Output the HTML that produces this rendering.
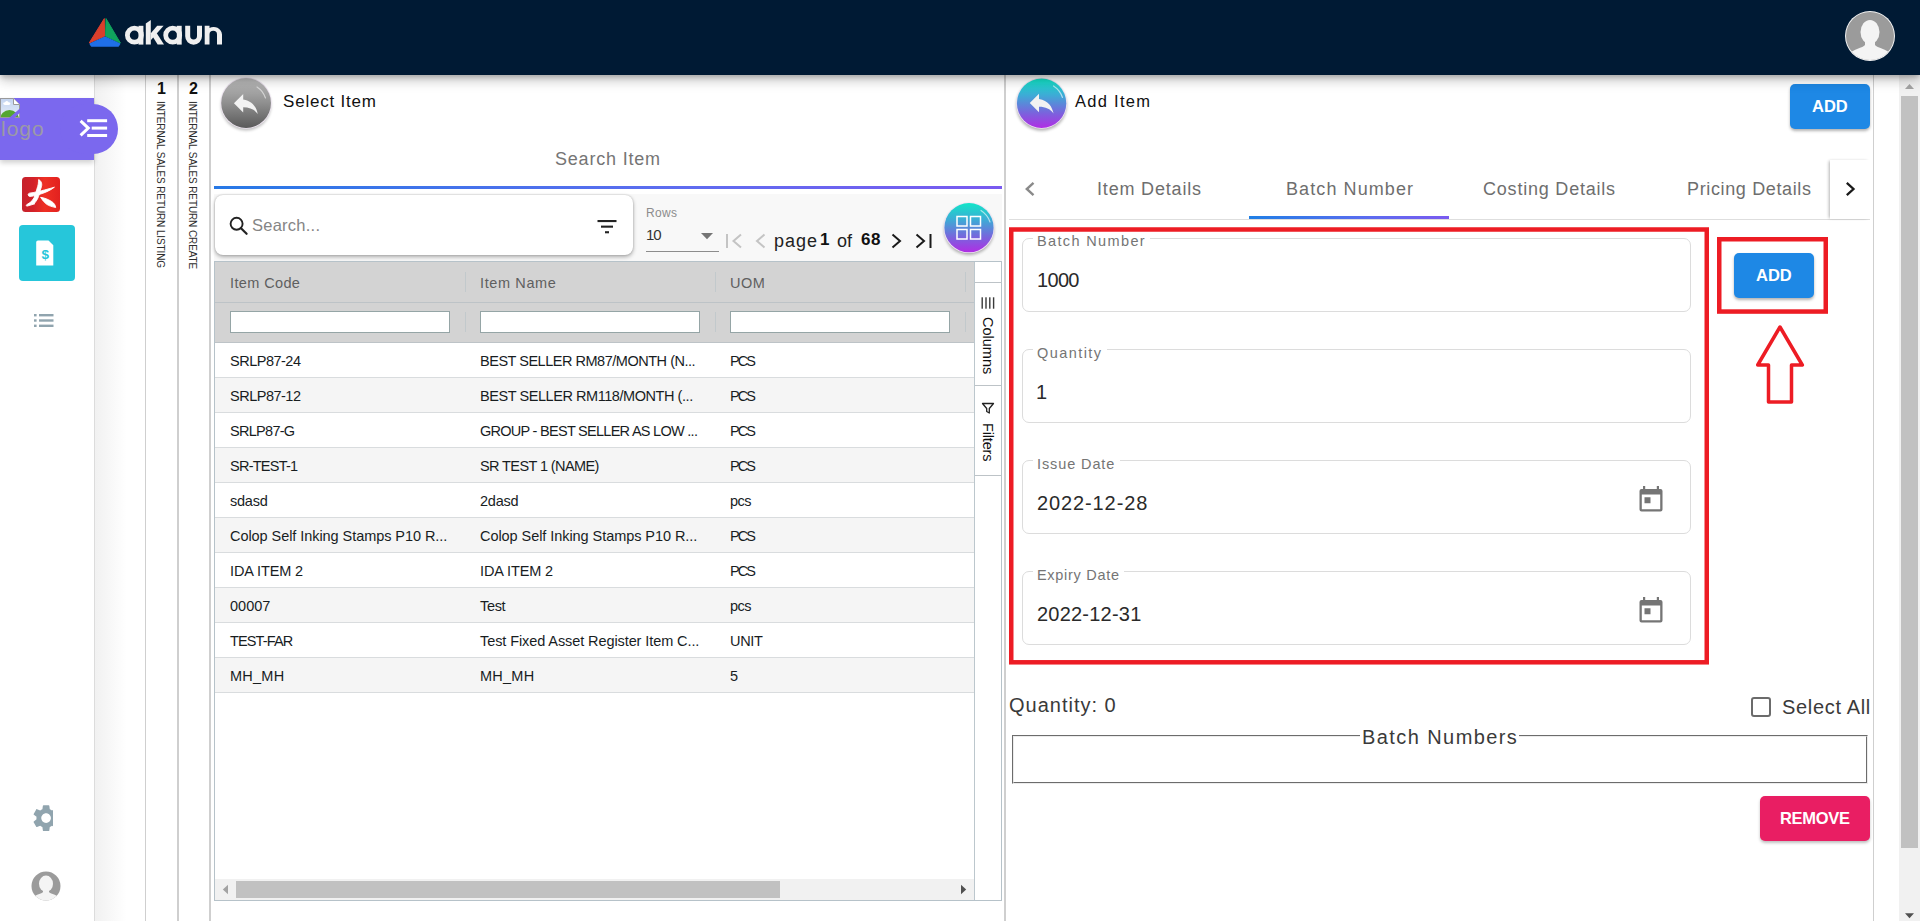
<!DOCTYPE html>
<html lang="en">
<head>
<meta charset="utf-8">
<title>akaun - Internal Sales Return</title>
<style>
*{box-sizing:border-box;margin:0;padding:0}
html,body{width:1920px;height:921px;overflow:hidden;background:#fff}
body{position:relative;font-family:"Liberation Sans",sans-serif;color:#222}
.abs{position:absolute}
.t{position:absolute;white-space:nowrap;line-height:20px;height:20px}
.vt{position:absolute;white-space:nowrap;line-height:12px;height:12px;transform-origin:0 0;transform:rotate(90deg)}
#nav{left:0;top:0;width:1920px;height:75px;background:#001a34;box-shadow:0 3px 5px -1px rgba(0,0,0,.2),0 6px 10px 0 rgba(0,0,0,.14),0 1px 18px 0 rgba(0,0,0,.12);z-index:50}
#side{left:0;top:75px;width:95px;height:846px;background:#fff;border-right:1px solid #dcdcdc}
#gpanel{left:95px;top:75px;width:51px;height:846px;background:linear-gradient(90deg,#f1f1f1,#fff 62%)}
.vcol{top:75px;height:846px;background:#fff}
#leftp{left:211px;top:75px;width:793px;height:846px;background:#fff}
#rightp{left:1004px;top:75px;width:870px;height:846px;background:#fff;border-left:2px solid #cfcfcf;border-right:1px solid #cfcfcf}
.row{position:absolute;left:215px;width:759px;height:35px;border-bottom:1px solid #d9dcde}
.row.o{background:#fff}.row.e{background:#f5f5f5}
.c{position:absolute;white-space:nowrap;line-height:20px;height:20px;top:8px;font-size:14.5px;color:#181d1f}
.fin{position:absolute;top:311px;width:220px;height:22px;background:#fff;border:1px solid #95a5a6}
.sep{position:absolute;width:1px;background:#c2c9cc}
.field{position:absolute;left:1022px;width:669px;border:1px solid #dcdcdc;border-radius:7px}
.flab{position:absolute;background:#fff;height:6px}
</style>
</head>
<body>

<!-- ===== structural panels ===== -->
<div class="abs" id="side"></div>
<div class="abs" id="gpanel"></div>
<div class="abs vcol" style="left:145px;width:33px;border-left:1px solid #cfcfcf"></div>
<div class="abs vcol" style="left:177px;width:34px;border-left:2px solid #cfcfcf;border-right:2px solid #cfcfcf"></div>
<div class="abs" id="leftp"></div>
<div class="abs" id="rightp"></div>

<!-- ===== NAVBAR ===== -->
<div class="abs" id="nav">
  <svg class="abs" style="left:86px;top:16px" width="38" height="34" viewBox="86 16 38 34">
    <path d="M104.3 18.6 L89.2 43 L104.6 36.2 Z" fill="#d93f2c" stroke="#d93f2c" stroke-width="1" stroke-linejoin="round"/>
    <path d="M106 18.6 L120.4 43 L105.6 36.2 Z" fill="#10a35d" stroke="#10a35d" stroke-width="1" stroke-linejoin="round"/>
    <path d="M105 37.2 L119.6 44 L118.4 46 L91.4 46 L90.2 44 Z" fill="#1f6fe8" stroke="#1f6fe8" stroke-width="1.4" stroke-linejoin="round"/>
  </svg>
  <svg class="abs" style="left:122px;top:16px" width="104" height="34" viewBox="122 16 104 34" fill="#efefef">
    <circle cx="134.400" cy="35.200" r="7" fill="none" stroke="#efefef" stroke-width="4.800"/><rect x="138.500" y="25.800" width="4.900" height="18.800"/>
    <path d="M145.800 23.600 L150.800 20 V44.600 H145.800 Z"/><path d="M150.800 33.200 L157.200 25.800 H163.600 L150.800 40.200 Z"/><path d="M152.600 36.600 L156.600 33 L164 44.600 H157.600 Z"/>
    <circle cx="172.700" cy="35.200" r="7" fill="none" stroke="#efefef" stroke-width="4.800"/><rect x="176.800" y="25.800" width="4.900" height="18.800"/>
    <path d="M185.200 25.800 V36.300 a8.400 8.400 0 0 0 16.800 0 V25.800 h-5 V36 a3.400 3.400 0 0 1 -6.800 0 V25.800 Z"/>
    <path d="M204.700 44.600 V25.800 h4.800 v2.300 a8.300 8.300 0 0 1 12.500 6.300 V44.600 h-5 V34.600 a3.750 3.750 0 0 0 -7.500 0 V44.600 Z"/>
  </svg>
  <!-- avatar -->
  <svg class="abs" style="left:1844px;top:10px" width="52" height="52" viewBox="0 0 52 52">
    <defs><clipPath id="avc"><circle cx="26" cy="26" r="24"/></clipPath></defs>
    <circle cx="26" cy="26" r="25" fill="#f4f4f4"/>
    <circle cx="26" cy="26" r="24" fill="#9b9b9b"/>
    <g clip-path="url(#avc)" fill="#f4f4f4">
      <ellipse cx="26" cy="22" rx="9.5" ry="12"/>
      <path d="M21 30 h10 v5 c2 3 12 4 16 9 v10 h-42 v-10 c4 -5 14 -6 16 -9 z"/>
    </g>
  </svg>
</div>

<!-- ===== SIDEBAR ===== -->
<div class="abs" style="left:0;top:98px;width:94px;height:62px;background:#7b68ee;box-shadow:0 3px 5px rgba(0,0,0,.18)"></div>
<div class="abs" style="left:60px;top:104px;width:58px;height:50px;border-radius:25px;background:#7b68ee"></div>
<!-- broken image icon -->
<svg class="abs" style="left:0;top:98px" width="21" height="21" viewBox="0 0 21 21">
  <defs><linearGradient id="bi" x1="0" y1="0" x2="0" y2="1"><stop offset="0" stop-color="#c3d4f0"/><stop offset="1" stop-color="#e6edf8"/></linearGradient>
  <clipPath id="bic"><path d="M1 1 H13.500 L19 6.500 V19 H1 Z"/></clipPath></defs>
  <path d="M0.500 0.500 H13.500 L19.500 6.500 V19.500 H0.500 Z" fill="url(#bi)" stroke="#9a9a9a" stroke-width="1"/>
  <g clip-path="url(#bic)"><circle cx="9.500" cy="21.500" r="9.500" fill="#55a630"/><ellipse cx="6.800" cy="5.600" rx="3.600" ry="1.500" fill="#fff"/><circle cx="6.800" cy="4.600" r="1.700" fill="#fff"/></g>
  <path d="M13.500 0.500 V6.500 H19.500" fill="#fff" stroke="#9a9a9a" stroke-width="1"/>
  <path d="M7.800 21 L21 9.600 V13.800 L13.300 21 Z" fill="#7b68ee"/>
</svg>
<span class="t" style="letter-spacing:1.00px;left:1px;top:119px;font-size:21px;color:#9c9aa6">logo</span>
<svg class="abs" style="left:78px;top:116px" width="32" height="26" viewBox="0 0 32 26">
  <path d="M2.600 4.800 L10.300 12.100 L2.600 19.400" fill="none" stroke="#fff" stroke-width="3"/>
  <rect x="9.200" y="3.200" width="19.900" height="3" fill="#fff"/>
  <rect x="13.700" y="10.600" width="15.400" height="3" fill="#fff"/>
  <rect x="9.200" y="18" width="19.900" height="3" fill="#fff"/>
</svg>
<!-- red app icon -->
<svg class="abs" style="left:22px;top:177px" width="38" height="35" viewBox="0 0 38 35">
  <defs><linearGradient id="rg" x1="0" x2="1"><stop offset="0" stop-color="#c5222c"/><stop offset=".3" stop-color="#d32129"/><stop offset=".6" stop-color="#ee3024"/><stop offset="1" stop-color="#e2211f"/></linearGradient></defs>
  <rect x="0" y="0" width="38" height="35" rx="3.500" fill="url(#rg)"/>
  <g fill="#fff" stroke="#fff" stroke-width=".9" stroke-linejoin="round">
    <path d="M16.700 2.500 C19.900 4.400 20.400 7.600 19 11 C17.700 14.500 17.400 18.500 15.300 22.300 C13.800 25 11.500 27 12.800 26.800 L5.200 29.100 C3.900 29.200 4 27.900 5.300 27.300 C9.300 25.400 12 22 13.200 17.800 C14.200 14 15.700 10 16.300 7 C16.600 5.300 16.300 4 16.700 2.500 Z"/>
    <path d="M6.200 17.700 C6 16.500 7.500 16 9 15.900 C14 15.300 24 12.700 32.400 10.200 C28 13.600 22 16.200 17 17.500 C13 18.600 9.500 19.600 7.600 19.400 C6.800 19.300 6.300 18.600 6.200 17.700 Z"/>
    <path d="M18.600 20.300 C22 20.800 26 22.200 29.600 24.500 C32.200 26.200 33.500 28.400 33.700 30.500 C30 29.700 27 29 24.400 27.100 C22 25.300 20.200 22.800 18.600 20.300 Z"/>
  </g>
</svg>
<!-- teal app icon -->
<div class="abs" style="left:19px;top:225px;width:56px;height:56px;border-radius:4px;background:#26c6da"></div>
<svg class="abs" style="left:35px;top:240px" width="20" height="26" viewBox="0 0 20 26">
  <path d="M3 0.500 H13.500 L18.300 5.300 V25.500 H1.200 V2.300 A1.800 1.800 0 0 1 3 0.500 Z" fill="#fff"/>
  <text x="10.200" y="18.800" font-family="Liberation Sans, sans-serif" font-size="13.500" font-weight="700" fill="#26c6da" text-anchor="middle">$</text>
</svg>
<!-- list icon -->
<svg class="abs" style="left:34px;top:313px" width="20" height="15" viewBox="0 0 20 15">
  <g fill="#90a4ae"><rect x="0" y="1" width="2.600" height="2.400"/><rect x="5" y="1" width="14.500" height="2.400"/><rect x="0" y="6.300" width="2.600" height="2.400"/><rect x="5" y="6.300" width="14.500" height="2.400"/><rect x="0" y="11.600" width="2.600" height="2.400"/><rect x="5" y="11.600" width="14.500" height="2.400"/></g>
</svg>
<!-- gear (clipped on right like the reference) -->
<div class="abs" style="left:30px;top:802px;width:23.300px;height:33px;overflow:hidden">
<svg class="abs" style="left:0;top:0" width="32.200" height="32.200" viewBox="0 0 24 24"><path fill="#90a4ae" d="M19.140 12.940c.04-.3.06-.61.06-.94 0-.32-.02-.64-.07-.94l2.030-1.580c.18-.14.23-.41.12-.61l-1.920-3.320c-.12-.22-.37-.29-.59-.22l-2.390.96c-.5-.38-1.030-.7-1.620-.94l-.36-2.540c-.04-.24-.24-.41-.48-.41h-3.840c-.24 0-.43.17-.47.41l-.36 2.540c-.59.24-1.130.57-1.620.94l-2.390-.96c-.22-.08-.47 0-.59.22L2.740 8.870c-.12.21-.08.47.12.61l2.030 1.580c-.05.3-.09.63-.09.94s.02.64.07.94l-2.030 1.580c-.18.14-.23.41-.12.61l1.920 3.320c.12.22.37.29.59.22l2.390-.96c.5.38 1.030.7 1.620.94l.36 2.540c.05.24.24.41.48.41h3.840c.24 0 .44-.17.47-.41l.36-2.540c.59-.24 1.130-.56 1.620-.94l2.390.96c.22.08.47 0 .59-.22l1.920-3.320c.12-.22.07-.47-.12-.61l-2.010-1.580zM12 15.600c-1.980 0-3.600-1.620-3.600-3.600s1.620-3.600 3.600-3.600 3.600 1.620 3.600 3.600-1.620 3.600-3.600 3.600z"/></svg>
</div>
<!-- small avatar -->
<svg class="abs" style="left:31px;top:871px" width="30" height="30" viewBox="0 0 30 30">
  <defs><clipPath id="avc2"><circle cx="15" cy="15" r="14.500"/></clipPath></defs>
  <circle cx="15" cy="15" r="14.500" fill="#9b9b9b"/>
  <g clip-path="url(#avc2)" fill="#f4f4f4">
    <ellipse cx="15" cy="12.800" rx="7" ry="8.200"/>
    <path d="M12 18 h6 v3 c1.500 2 7 2.500 9.500 5 v6 h-25 v-6 c2.500 -2.500 8 -3 9.500 -5 z"/>
  </g>
</svg>

<!-- ===== vertical breadcrumb columns ===== -->
<span class="t" style="left:157px;top:79px;font-size:16px;font-weight:700;color:#111">1</span>
<span class="t" style="left:189px;top:79px;font-size:16px;font-weight:700;color:#111">2</span>
<span class="vt" style="letter-spacing:-0.11px;left:166px;top:101px;font-size:10px;color:#2e2e2e">INTERNAL SALES RETURN LISTING</span>
<span class="vt" style="letter-spacing:-0.11px;left:198px;top:101px;font-size:10px;color:#2e2e2e">INTERNAL SALES RETURN CREATE</span>

<!-- ===== LEFT PANEL ===== -->
<!-- grey back button -->
<svg class="abs" style="left:218px;top:76px" width="58" height="58" viewBox="0 0 58 58">
  <defs>
    <linearGradient id="gg" x1="0" y1="0" x2="0" y2="1"><stop offset="0" stop-color="#bdbdbd"/><stop offset=".5" stop-color="#8f8f8f"/><stop offset="1" stop-color="#5a5a5a"/></linearGradient>
    <filter id="sh" x="-20%" y="-20%" width="140%" height="150%"><feGaussianBlur stdDeviation="1.6"/></filter>
  </defs>
  <circle cx="28" cy="29.500" r="25" fill="#000" opacity=".26" filter="url(#sh)"/>
  <circle cx="28.100" cy="27" r="25.700" fill="#efe6f2"/>
  <circle cx="28.100" cy="27" r="24.900" fill="url(#gg)"/>
  <path d="M39 11 a21 21 0 0 1 8.500 11" fill="none" stroke="#fff" stroke-opacity=".55" stroke-width="1.200" stroke-linecap="round"/>
  <g transform="translate(12 11.500) scale(1.320)"><path d="M10 9V5l-7 7 7 7v-4.100c5 0 8.500 1.600 11 5.100-1-5-4-10-11-11z" fill="#f2f2f2"/></g>
</svg>
<span class="t" style="letter-spacing:0.80px;left:283px;top:92px;font-size:17px;color:#111">Select Item</span>
<span class="t" style="letter-spacing:0.80px;left:555px;top:149px;font-size:18px;color:#757575">Search Item</span>
<!-- gradient rule -->
<div class="abs" style="left:214px;top:186px;width:788px;height:3px;background:linear-gradient(90deg,#2779e6,#5f6cf0 60%,#7a5af0)"></div>
<!-- toolbar backdrop -->
<div class="abs" style="left:214px;top:194px;width:788px;height:67px;background:#f8f8f8"></div>
<!-- search card -->
<div class="abs" style="left:215px;top:195px;width:418px;height:60px;background:#fff;border-radius:8px;box-shadow:0 2px 4px rgba(0,0,0,.3),0 0 2px rgba(0,0,0,.22)"></div>
<svg class="abs" style="left:228px;top:215px" width="22" height="22" viewBox="0 0 22 22">
  <circle cx="8.600" cy="8.800" r="6" fill="none" stroke="#222" stroke-width="1.900"/>
  <path d="M13 13.200 L18.600 18.800" stroke="#222" stroke-width="2.200" stroke-linecap="round"/>
</svg>
<span class="t" style="letter-spacing:0.25px;left:252px;top:215px;font-size:16.500px;color:#858585">Search...</span>
<svg class="abs" style="left:597px;top:219px" width="20" height="16" viewBox="0 0 20 16">
  <rect x="0.500" y="1" width="19" height="2.100" fill="#222"/><rect x="4" y="6.600" width="12" height="2.100" fill="#222"/><rect x="8" y="12.200" width="4" height="2.100" fill="#222"/>
</svg>
<!-- rows select -->
<span class="t" style="letter-spacing:0.33px;left:646px;top:203px;font-size:12px;color:#8c8c8c">Rows</span>
<span class="t" style="letter-spacing:-1.00px;left:646px;top:225px;font-size:15px;color:#333">10</span>
<svg class="abs" style="left:700px;top:232px" width="14" height="8" viewBox="0 0 14 8"><path d="M1 1 H13 L7 7.200 Z" fill="#757575"/></svg>
<div class="abs" style="left:646px;top:251px;width:73px;height:1px;background:#8d8d8d"></div>
<!-- pager -->
<svg class="abs" style="left:724px;top:232px" width="212" height="18" viewBox="724 232 212 18" fill="none" stroke-width="2" stroke-linejoin="miter">
  <path d="M727 234 V248" stroke="#c4c4c4"/><path d="M741 234.500 L733.500 241 L741 247.500" stroke="#c4c4c4"/>
  <path d="M764.500 234.500 L757 241 L764.500 247.500" stroke="#c4c4c4"/>
  <path d="M892.500 234.500 L900 241 L892.500 247.500" stroke="#1a1a1a"/>
  <path d="M916.500 234.500 L924 241 L916.500 247.500" stroke="#1a1a1a"/><path d="M930.500 234 V248" stroke="#1a1a1a"/>
</svg>
<span class="t" style="letter-spacing:1.00px;left:774px;top:231px;font-size:18px;color:#222">page</span>
<span class="t" style="left:820px;top:230px;font-size:17px;font-weight:700;color:#111">1</span>
<span class="t" style="letter-spacing:0.00px;left:837px;top:231px;font-size:18px;color:#222">of</span>
<span class="t" style="letter-spacing:0.50px;left:861px;top:230px;font-size:17px;font-weight:700;color:#111">68</span>
<!-- gradient grid button -->
<svg class="abs" style="left:940px;top:199px" width="58" height="60" viewBox="0 0 58 60">
  <defs><linearGradient id="tp" x1="0" y1="0" x2="0" y2="1"><stop offset="0" stop-color="#12e6c8"/><stop offset=".35" stop-color="#3fa9d6"/><stop offset=".7" stop-color="#7a63dd"/><stop offset="1" stop-color="#b02ee4"/></linearGradient></defs>
  <circle cx="29" cy="31" r="25" fill="#000" opacity=".3" filter="url(#sh)"/>
  <circle cx="29" cy="28.700" r="25.400" fill="#f0e4f5"/>
  <circle cx="29" cy="28.700" r="24.600" fill="url(#tp)"/>
  <path d="M41 11.500 a22 22 0 0 1 9 11.500" fill="none" stroke="#fff" stroke-opacity=".6" stroke-width="1.200" stroke-linecap="round"/>
  <g fill="none" stroke="#fff" stroke-width="1.500"><rect x="17" y="17.500" width="10" height="9.500"/><rect x="30.500" y="17.500" width="10" height="9.500"/><rect x="17" y="30.500" width="10" height="9.500"/><rect x="30.500" y="30.500" width="10" height="9.500"/></g>
</svg>
<!-- grid frame -->
<div class="abs" style="left:214px;top:261px;width:788px;height:640px;border:1px solid #b6c2c9;background:#fff"></div>
<div class="abs" style="left:974px;top:262px;width:1px;height:638px;background:#bcc7cd"></div>
<div class="abs" style="left:215px;top:262px;width:759px;height:81px;background:#d3d3d3;border-bottom:1px solid #bdc3c7"></div>
<div class="abs" style="left:215px;top:302px;width:759px;height:1px;background:#bdc3c7"></div>
<span class="t" style="letter-spacing:0.38px;left:230px;top:273px;font-size:14.500px;color:#5f5f5f">Item Code</span>
<span class="t" style="letter-spacing:0.62px;left:480px;top:273px;font-size:14.500px;color:#5f5f5f">Item Name</span>
<span class="t" style="letter-spacing:0.50px;left:730px;top:273px;font-size:14.500px;color:#5f5f5f">UOM</span>
<div class="sep" style="left:465px;top:272px;height:20px"></div><div class="sep" style="left:715px;top:272px;height:20px"></div><div class="sep" style="left:965px;top:272px;height:20px"></div>
<div class="sep" style="left:465px;top:312px;height:20px"></div><div class="sep" style="left:715px;top:312px;height:20px"></div><div class="sep" style="left:965px;top:312px;height:20px"></div>
<div class="fin" style="left:230px"></div><div class="fin" style="left:480px"></div><div class="fin" style="left:730px"></div>
<div class="row o" style="top:343px"><span class="c" style="letter-spacing:-0.50px;left:15px">SRLP87-24</span><span class="c" style="letter-spacing:-0.48px;left:265px">BEST SELLER RM87/MONTH (N...</span><span class="c" style="letter-spacing:-2.00px;left:515px">PCS</span></div>
<div class="row e" style="top:378px"><span class="c" style="letter-spacing:-0.50px;left:15px">SRLP87-12</span><span class="c" style="letter-spacing:-0.44px;left:265px">BEST SELLER RM118/MONTH (...</span><span class="c" style="letter-spacing:-2.00px;left:515px">PCS</span></div>
<div class="row o" style="top:413px"><span class="c" style="letter-spacing:-0.71px;left:15px">SRLP87-G</span><span class="c" style="letter-spacing:-0.72px;left:265px">GROUP - BEST SELLER AS LOW ...</span><span class="c" style="letter-spacing:-2.00px;left:515px">PCS</span></div>
<div class="row e" style="top:448px"><span class="c" style="letter-spacing:-0.75px;left:15px">SR-TEST-1</span><span class="c" style="letter-spacing:-0.60px;left:265px">SR TEST 1 (NAME)</span><span class="c" style="letter-spacing:-2.00px;left:515px">PCS</span></div>
<div class="row o" style="top:483px"><span class="c" style="letter-spacing:-0.25px;left:15px">sdasd</span><span class="c" style="letter-spacing:-0.25px;left:265px">2dasd</span><span class="c" style="letter-spacing:-0.50px;left:515px">pcs</span></div>
<div class="row e" style="top:518px"><span class="c" style="letter-spacing:-0.06px;left:15px">Colop Self Inking Stamps P10 R...</span><span class="c" style="letter-spacing:-0.06px;left:265px">Colop Self Inking Stamps P10 R...</span><span class="c" style="letter-spacing:-2.00px;left:515px">PCS</span></div>
<div class="row o" style="top:553px"><span class="c" style="letter-spacing:-0.11px;left:15px">IDA ITEM 2</span><span class="c" style="letter-spacing:-0.11px;left:265px">IDA ITEM 2</span><span class="c" style="letter-spacing:-2.00px;left:515px">PCS</span></div>
<div class="row e" style="top:588px"><span class="c" style="letter-spacing:0.00px;left:15px">00007</span><span class="c" style="letter-spacing:-0.33px;left:265px">Test</span><span class="c" style="letter-spacing:-0.50px;left:515px">pcs</span></div>
<div class="row o" style="top:623px"><span class="c" style="letter-spacing:-0.86px;left:15px">TEST-FAR</span><span class="c" style="letter-spacing:-0.09px;left:265px">Test Fixed Asset Register Item C...</span><span class="c" style="letter-spacing:-0.33px;left:515px">UNIT</span></div>
<div class="row e" style="top:658px"><span class="c" style="letter-spacing:0.25px;left:15px">MH_MH</span><span class="c" style="letter-spacing:0.25px;left:265px">MH_MH</span><span class="c" style="letter-spacing:0.00px;left:515px">5</span></div>
<!-- tool panel -->
<div class="abs" style="left:975px;top:282px;width:26px;height:1px;background:#bdc3c7"></div>
<div class="abs" style="left:975px;top:385px;width:26px;height:1px;background:#bdc3c7"></div>
<div class="abs" style="left:975px;top:475px;width:26px;height:1px;background:#bdc3c7"></div>
<svg class="abs" style="left:980px;top:297px" width="16" height="12" viewBox="0 0 16 12" fill="#3a3a3a"><rect x="1.500" y="0.300" width="1.400" height="11.400"/><rect x="5.300" y="0.300" width="1.400" height="11.400"/><rect x="9.100" y="0.300" width="1.400" height="11.400"/><rect x="12.900" y="0.300" width="1.400" height="11.400"/></svg>
<span class="vt" style="letter-spacing:0.00px;left:996px;top:317px;line-height:16px;height:16px;font-size:14.500px;color:#111">Columns</span>
<svg class="abs" style="left:981px;top:402px" width="14" height="13" viewBox="0 0 14 13" fill="none" stroke="#222" stroke-width="1.300" stroke-linejoin="round"><path d="M1.500 1.500 H12.500 L8.300 6.500 V11 L5.700 9.500 V6.500 Z"/></svg>
<span class="vt" style="letter-spacing:-0.17px;left:996px;top:423px;line-height:16px;height:16px;font-size:14.500px;color:#111">Filters</span>
<!-- horizontal scrollbar -->
<div class="abs" style="left:215px;top:879px;width:759px;height:21px;background:#f1f1f1"></div>
<div class="abs" style="left:236px;top:881px;width:544px;height:17px;background:#c1c1c1"></div>
<svg class="abs" style="left:215px;top:879px" width="759" height="21" viewBox="0 0 759 21"><path d="M13 5.800 V15.200 L7.800 10.500 Z" fill="#a3a3a3"/><path d="M746 5.800 V15.200 L751.200 10.500 Z" fill="#505050"/></svg>

<!-- ===== RIGHT PANEL ===== -->
<svg class="abs" style="left:1012px;top:76px" width="58" height="60" viewBox="0 0 58 60">
  <circle cx="29.500" cy="29.500" r="25.300" fill="#000" opacity=".3" filter="url(#sh)"/>
  <circle cx="29.600" cy="27.200" r="25.500" fill="#f0e4f5"/>
  <circle cx="29.600" cy="27.200" r="24.700" fill="url(#tp)"/>
  <path d="M41.500 10 a22 22 0 0 1 9 11.500" fill="none" stroke="#fff" stroke-opacity=".6" stroke-width="1.200" stroke-linecap="round"/>
  <g transform="translate(13.800 11.200) scale(1.320)"><path d="M10 9V5l-7 7 7 7v-4.100c5 0 8.500 1.600 11 5.100-1-5-4-10-11-11z" fill="#f2f2f2"/></g>
</svg>
<span class="t" style="letter-spacing:1.29px;left:1075px;top:91px;font-size:16.500px;color:#111">Add Item</span>
<!-- top ADD -->
<div class="abs" style="left:1790px;top:84px;width:80px;height:45px;border-radius:5px;background:#1e88e5;box-shadow:0 2px 3px rgba(0,0,0,.3)"></div>
<span class="t" style="letter-spacing:0.00px;left:1812px;top:96px;font-size:16.500px;font-weight:700;color:#fff">ADD</span>
<!-- tabs -->
<div class="abs" style="left:1009px;top:219px;width:861px;height:1px;background:#dedede"></div>
<svg class="abs" style="left:1022px;top:180px" width="16" height="18" viewBox="0 0 16 18"><path d="M11.500 2.800 L4.800 9 L11.500 15.200" fill="none" stroke="#8a8a8a" stroke-width="2.400"/></svg>
<span class="t" style="letter-spacing:0.82px;left:1097px;top:179px;font-size:18px;color:#6e6e6e">Item Details</span>
<span class="t" style="letter-spacing:1.09px;left:1286px;top:179px;font-size:18px;color:#6e6e6e">Batch Number</span>
<span class="t" style="letter-spacing:0.79px;left:1483px;top:179px;font-size:18px;color:#6e6e6e">Costing Details</span>
<span class="t" style="letter-spacing:0.64px;left:1687px;top:179px;font-size:18px;color:#6e6e6e">Pricing Details</span>
<div class="abs" style="left:1249px;top:216px;width:200px;height:3px;background:linear-gradient(90deg,#1f7fe5,#5c6cf0 60%,#7a5af0)"></div>
<div class="abs" style="left:1830px;top:160px;width:40px;height:59px;background:#fff;box-shadow:-2px 0 3px -1px rgba(0,0,0,.3)"></div>
<svg class="abs" style="left:1842px;top:180px" width="16" height="18" viewBox="0 0 16 18"><path d="M4.800 2.800 L11.500 9 L4.800 15.200" fill="none" stroke="#1a1a1a" stroke-width="2.300"/></svg>
<!-- fields -->
<div class="field" style="top:238px;height:74px"></div>
<div class="field" style="top:349px;height:74px"></div>
<div class="field" style="top:460px;height:74px"></div>
<div class="field" style="top:571px;height:74px"></div>
<div class="flab" style="left:1033px;top:236px;width:117px"></div>
<div class="flab" style="left:1033px;top:347px;width:74px"></div>
<div class="flab" style="left:1033px;top:458px;width:87px"></div>
<div class="flab" style="left:1033px;top:569px;width:91px"></div>
<span class="t" style="letter-spacing:1.36px;left:1037px;top:231px;font-size:14.500px;color:#757575">Batch Number</span>
<span class="t" style="letter-spacing:1.43px;left:1037px;top:343px;font-size:14.500px;color:#757575">Quantity</span>
<span class="t" style="letter-spacing:0.89px;left:1037px;top:454px;font-size:14.500px;color:#757575">Issue Date</span>
<span class="t" style="letter-spacing:0.70px;left:1037px;top:565px;font-size:14.500px;color:#757575">Expiry Date</span>
<span class="t" style="letter-spacing:-0.67px;left:1037px;top:270px;font-size:20px;color:#2a2a2a">1000</span>
<span class="t" style="left:1036px;top:382px;font-size:20px;color:#2a2a2a">1</span>
<span class="t" style="letter-spacing:0.89px;left:1037px;top:493px;font-size:20px;color:#2a2a2a">2022-12-28</span>
<span class="t" style="letter-spacing:0.22px;left:1037px;top:604px;font-size:20px;color:#2a2a2a">2022-12-31</span>
<!-- calendar icons -->
<svg class="abs" style="left:1639px;top:485px" width="24" height="27" viewBox="0 0 24 27"><path fill="#757575" fill-rule="evenodd" d="M4 1h2.200v3h11.600v-3H20v3h1.500a2 2 0 0 1 2 2V24.500a2 2 0 0 1 -2 2H2.500a2 2 0 0 1 -2 -2V6a2 2 0 0 1 2 -2H4Z M2.800 9.500V24.200H21.200V9.500Z M5.500 12.300h6v6h-6Z"/></svg>
<svg class="abs" style="left:1639px;top:596px" width="24" height="27" viewBox="0 0 24 27"><path fill="#757575" fill-rule="evenodd" d="M4 1h2.200v3h11.600v-3H20v3h1.500a2 2 0 0 1 2 2V24.500a2 2 0 0 1 -2 2H2.500a2 2 0 0 1 -2 -2V6a2 2 0 0 1 2 -2H4Z M2.800 9.500V24.200H21.200V9.500Z M5.500 12.300h6v6h-6Z"/></svg>
<!-- inner ADD -->
<div class="abs" style="left:1734px;top:253px;width:80px;height:45px;border-radius:5px;background:#1e88e5;box-shadow:0 2px 3px rgba(0,0,0,.3)"></div>
<span class="t" style="letter-spacing:0.00px;left:1756px;top:265px;font-size:16.500px;font-weight:700;color:#fff">ADD</span>
<!-- red annotations -->
<svg class="abs" style="left:1000px;top:220px" width="840" height="450" viewBox="1000 220 840 450" fill="none" stroke="#ed1c24">
  <rect x="1011.250" y="229.500" width="695.500" height="432.800" stroke-width="4.500"/>
  <rect x="1719.250" y="239.250" width="106.500" height="72.300" stroke-width="4.500"/>
  <path d="M1780 327 L1802.300 365 H1791.500 V402 H1768.500 V365 H1757.700 Z" stroke-width="3.500" stroke-linejoin="round"/>
</svg>
<!-- lower area -->
<span class="t" style="letter-spacing:1.00px;left:1009px;top:695px;font-size:20px;color:#3a3a3a">Quantity: 0</span>
<div class="abs" style="left:1751px;top:697px;width:20px;height:20px;border:2px solid #6b6b6b;border-radius:3px;background:#fff"></div>
<span class="t" style="letter-spacing:0.67px;left:1782px;top:697px;font-size:20px;color:#3a3a3a">Select All</span>
<div class="abs" style="left:1012px;top:735px;width:856px;height:49px;border:1px solid;border-color:#6c6c6c #ececec #ececec #6c6c6c"></div>
<div class="abs" style="left:1013px;top:736px;width:854px;height:47px;border:1px solid;border-color:#ececec #6c6c6c #6c6c6c #ececec"></div>
<div class="abs" style="left:1360px;top:730px;width:159px;height:12px;background:#fff"></div>
<span class="t" style="letter-spacing:1.42px;left:1362px;top:727px;font-size:20px;color:#3a3a3a">Batch Numbers</span>
<div class="abs" style="left:1760px;top:796px;width:110px;height:45px;border-radius:5px;background:#e91e63;box-shadow:0 2px 3px rgba(0,0,0,.25)"></div>
<span class="t" style="letter-spacing:-0.30px;left:1780px;top:808px;font-size:16.500px;font-weight:700;color:#fff">REMOVE</span>

<!-- ===== page scrollbar ===== -->
<div class="abs" style="left:1899px;top:75px;width:21px;height:846px;background:#f1f1f1"></div>
<div class="abs" style="left:1901px;top:96px;width:17px;height:752px;background:#c1c1c1"></div>
<svg class="abs" style="left:1899px;top:75px" width="21" height="846" viewBox="0 0 21 846"><path d="M10.500 9 L15 14 H6 Z" fill="#a3a3a3"/><path d="M10.500 843.200 L15 838.200 H6 Z" fill="#505050"/></svg>

</body>
</html>
